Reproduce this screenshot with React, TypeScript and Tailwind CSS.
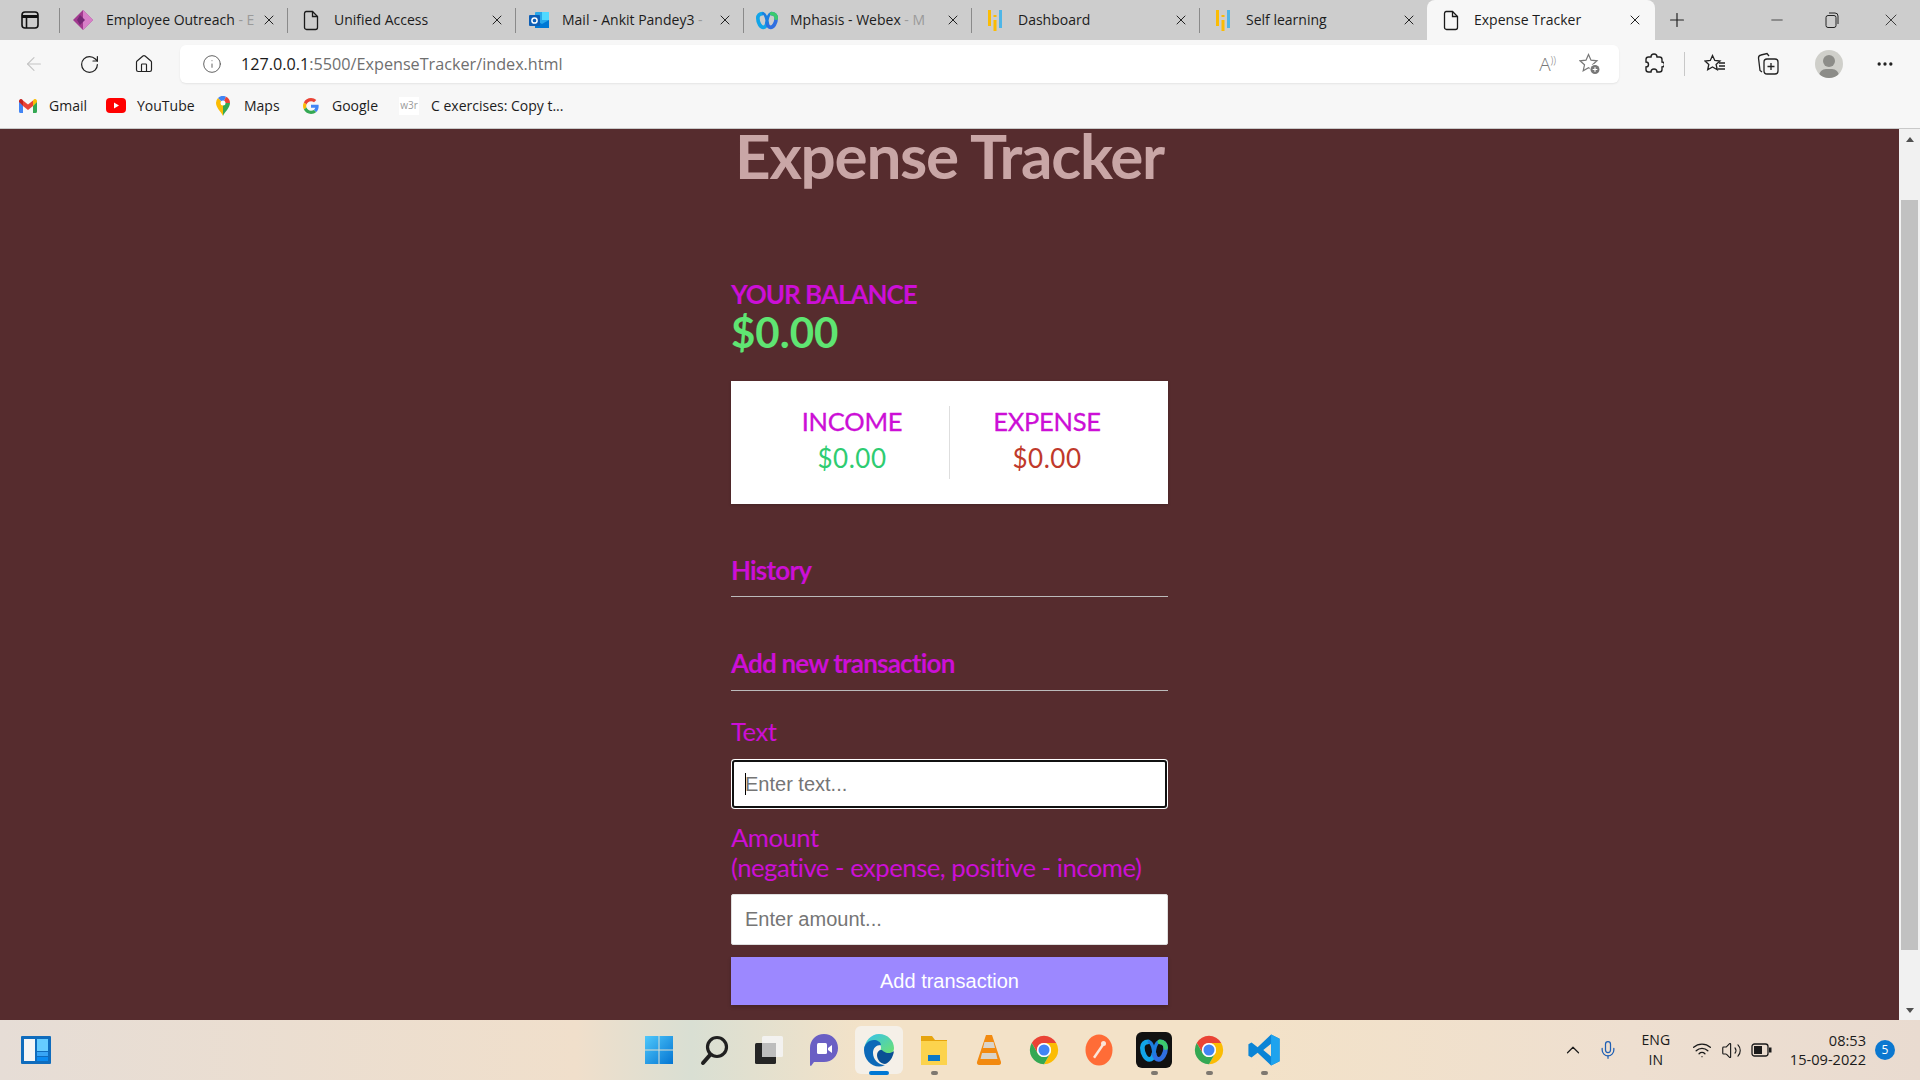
import { ArrowLeft, RotateCw, Home, Info, Plus, Minus, X, Ellipsis, ChevronUp, Mic, Wifi, Volume2 } from 'lucide-react';

function FileIcon() {
  return (
    <svg width="16" height="21" viewBox="0 0 16 20" fill="none" stroke="#1a1a1a" strokeWidth="1.3">
      <path d="M3 1h6.500L14.500 6v11a2 2 0 0 1-2 2h-9a2 2 0 0 1-2-2V3a2 2 0 0 1 1.500-2z" />
      <path d="M9.500 1v5h5" />
    </svg>
  );
}

function PowerApps() {
  return (
    <svg width="22" height="22" viewBox="0 0 22 22">
      <path d="M11 1l10 10-10 10L1 11z" fill="#a23a8f" />
      <path d="M11 1l10 10-10 10z" fill="#d87fc8" />
      <path d="M8 6l5 5-5 5-3-5z" fill="#742774" />
    </svg>
  );
}

function Outlook() {
  return (
    <svg width="22" height="20" viewBox="0 0 22 20">
      <rect x="7" y="2" width="14" height="16" rx="1" fill="#28a8ea" />
      <path d="M14 2h7v8h-7z" fill="#50d9ff" />
      <path d="M7 10l7 4 7-4v8H7z" fill="#0078d4" />
      <rect x="1" y="5" width="11" height="11" rx="1" fill="#0f5fb5" />
      <circle cx="6.500" cy="10.500" r="2.600" fill="none" stroke="#fff" strokeWidth="1.500" />
    </svg>
  );
}

function WebexMark({ size = 22 }: { size?: number }) {
  return (
    <svg width={size} height={size} viewBox="0 0 24 24" fill="none">
      <path d="M7 5c-3 0-5 2-5 5 0 5 3 10 6 10 2.500 0 3.500-2.500 4-5" stroke="#12a5e8" strokeWidth="4" strokeLinecap="round" />
      <path d="M17 5c3 0 5 2 5 5 0 5-3 10-6 10-2.500 0-3.500-2.500-4-5" stroke="#2f6fe0" strokeWidth="4" strokeLinecap="round" />
      <path d="M8 5c2.500 1 3.500 5 4 10M16 5c-2.500 1-3.500 5-4 10" stroke="#1c7ee0" strokeWidth="3" strokeLinecap="round" />
      <path d="M17 5c3 0 5 2 5 5" stroke="#3ccb6d" strokeWidth="4" strokeLinecap="round" />
    </svg>
  );
}

function BarsIcon() {
  return (
    <svg width="14" height="22" viewBox="0 0 14 22">
      <rect x="0" y="1" width="3" height="16" fill="#fbbc04" />
      <rect x="5.500" y="11" width="3" height="11" fill="#fbbc04" />
      <rect x="5.500" y="6" width="3" height="2" fill="#fbbc04" />
      <rect x="11" y="1" width="3" height="18" fill="#4db6e8" />
    </svg>
  );
}

function ChromeLogo({ size = 34 }: { size?: number }) {
  return (
    <svg width={size} height={size} viewBox="0 0 24 24">
      <path d="M3.340 7A10 10 0 0 1 20.660 7H12a5 5 0 0 0-4.330 7.500z" fill="#ea4335" />
      <path d="M20.660 7A10 10 0 0 1 12 22l4.330-7.500A5 5 0 0 0 12 7z" fill="#fbbc04" />
      <path d="M12 22A10 10 0 0 1 3.340 7l4.330 7.500a5 5 0 0 0 8.660 0z" fill="#34a853" />
      <circle cx="12" cy="12" r="5" fill="#fff" />
      <circle cx="12" cy="12" r="3.900" fill="#4285f4" />
    </svg>
  );
}

function GoogleG() {
  return (
    <svg width="16" height="16" viewBox="0 0 48 48">
      <path fill="#EA4335" d="M24 9.500c3.500 0 6.600 1.200 9.100 3.600l6.800-6.800C35.800 2.500 30.300 0 24 0 14.600 0 6.500 5.400 2.600 13.200l7.900 6.200C12.400 13.600 17.700 9.500 24 9.500z" />
      <path fill="#4285F4" d="M46.980 24.500c0-1.600-.15-3.100-.4-4.500H24v9h12.900c-.6 3-2.250 5.500-4.800 7.200l7.700 6c4.500-4.200 7.180-10.300 7.180-17.700z" />
      <path fill="#FBBC05" d="M10.500 28.600A14.500 14.500 0 0 1 9.700 24c0-1.600.3-3.200.8-4.600l-7.900-6.200A24 24 0 0 0 0 24c0 3.900.9 7.500 2.600 10.800z" />
      <path fill="#34A853" d="M24 48c6.500 0 11.900-2.100 15.800-5.800l-7.700-6c-2.100 1.400-4.900 2.300-8.100 2.300-6.300 0-11.600-4.200-13.500-9.900l-7.900 6.200C6.500 42.600 14.600 48 24 48z" />
    </svg>
  );
}

function GmailIcon() {
  return (
    <svg width="18" height="14" viewBox="0 0 18 14">
      <path d="M0 2.500V12.500A1.500 1.500 0 0 0 1.500 14H4V6.500z" fill="#4285f4" />
      <path d="M14 6.500V14h2.500A1.500 1.500 0 0 0 18 12.500V2.500z" fill="#34a853" />
      <path d="M4 7V1.500L9 5.500l5-4V7L9 11z" fill="#ea4335" />
      <path d="M0 3V2A2 2 0 0 1 3.200.4L4 1.500V7z" fill="#c5221f" />
      <path d="M18 3V2A2 2 0 0 0 14.800.4L14 1.500V7z" fill="#fbbc04" />
    </svg>
  );
}

function YoutubeIcon() {
  return (
    <svg width="20" height="15" viewBox="0 0 20 15">
      <rect width="20" height="15" rx="4" fill="#f00" />
      <path d="M8 4.500l5 3-5 3z" fill="#fff" />
    </svg>
  );
}

function MapsIcon() {
  return (
    <svg width="14" height="20" viewBox="0 0 14 20">
      <path d="M7 20C5.500 16 0 12 0 7a7 7 0 0 1 2-5l5 5z" fill="#fbbc04" />
      <path d="M2 2a7 7 0 0 1 8-1.300L7 7z" fill="#4285f4" />
      <path d="M10 .7A7 7 0 0 1 14 7l-7 0z" fill="#ea4335" />
      <path d="M14 7c0 5-5.500 9-7 13L7 7z" fill="#34a853" />
      <circle cx="7" cy="7" r="2.500" fill="#fff" />
    </svg>
  );
}

function Tab({ title, icon, fade, active }: { title: string; icon: React.ReactNode; fade?: string; active?: boolean }) {
  return (
    <div className={active
      ? 'relative flex h-[40px] w-[228px] items-center rounded-t-lg bg-[#f7f7f7] pl-[7px] pr-[12px]'
      : 'relative flex h-[25px] w-[228px] items-center border-l border-[#8a8a8a] pl-[6px] pr-[10px]'}>
      <span className="flex w-[34px] shrink-0 items-center justify-center">{icon}</span>
      <span className="mb-[2px] ml-[6px] flex-1 overflow-hidden whitespace-nowrap text-[14px] text-[#1c1c1c]">
        {title}
        {fade && <span className="text-[#9a9a9a]">{fade}</span>}
      </span>
      <X size={16} strokeWidth={1.5} className="shrink-0 text-[#222]" />
    </div>
  );
}

function TabStrip() {
  return (
    <div className="flex h-[40px] items-end bg-[#cdcdcd]">
      <div className="flex h-[40px] w-[59px] shrink-0 items-center pl-[21px]">
        <svg width="18" height="18" viewBox="0 0 18 18" fill="none" stroke="#111" strokeWidth="1.600">
          <rect x="1" y="1" width="16" height="16" rx="3" />
          <path d="M1 5.500h16" strokeWidth="3" />
          <path d="M5.500 5v12" />
        </svg>
      </div>
      <div className="flex h-[40px] items-center">
        <Tab title="Employee Outreach" fade=" - E" icon={<PowerApps />} />
        <Tab title="Unified Access" icon={<FileIcon />} />
        <Tab title="Mail - Ankit Pandey3" fade=" -" icon={<Outlook />} />
        <Tab title="Mphasis - Webex" fade=" - M" icon={<WebexMark />} />
        <Tab title="Dashboard" icon={<BarsIcon />} />
        <Tab title="Self learning" icon={<BarsIcon />} />
        <Tab title="Expense Tracker" icon={<FileIcon />} active />
      </div>
      <div className="flex h-[40px] flex-1 items-center">
        <Plus size={22} strokeWidth={1.3} className="ml-[11px] text-[#222]" />
        <div className="ml-auto flex items-center pr-[19px]">
          <Minus size={18} strokeWidth={1} className="mr-[39px] text-[#222]" />
          <svg width="14" height="16" viewBox="0 0 14 16" fill="none" stroke="#222" className="mr-[42px]">
            <rect x="1" y="3.500" width="10" height="12" rx="2" />
            <path d="M4 1h6a3 3 0 0 1 3 3v8" />
          </svg>
          <X size={20} strokeWidth={1} className="text-[#222]" />
        </div>
      </div>
    </div>
  );
}

function Toolbar() {
  return (
    <div className="flex h-[48px] items-center bg-[#f7f7f7]">
      <ArrowLeft size={22} strokeWidth={1.2} className="ml-[23px] text-[#c4c4c4]" />
      <RotateCw size={21} strokeWidth={1.4} className="ml-[34px] text-[#222]" />
      <Home size={20} strokeWidth={1.4} className="ml-[34px] text-[#222]" />
      <div className="ml-[26px] flex h-[38px] w-[1439px] items-center rounded-md bg-white pl-[22px] shadow-[0_1px_2px_rgba(0,0,0,0.08)]">
        <Info size={20} strokeWidth={1.1} className="text-[#555]" />
        <span className="ml-[19px] text-[16.200px] text-[#1a1a1a]">
          127.0.0.1<span className="text-[#6f6f6f]">:5500/ExpenseTracker/index.html</span>
        </span>
        <div className="ml-auto flex items-center gap-[23px] pr-[18px]">
          <span className="text-[19px] font-light leading-none text-[#777]">A<span className="align-top text-[10px]">))</span></span>
          <svg width="22" height="22" viewBox="0 0 22 22" fill="none" stroke="#777" strokeWidth="1.200">
            <path d="M9.500 1.500l2.500 5.700 6 .6-4.500 4 1.300 6-5.300-3.100-5.300 3.100 1.300-6L1 7.800l6-.6z" />
            <circle cx="16" cy="16.500" r="5.500" fill="#fff" stroke="none" />
            <circle cx="16" cy="16.500" r="4.500" fill="#777" stroke="none" />
            <path d="M16 14.200v4.600M13.700 16.500h4.600" stroke="#fff" />
          </svg>
        </div>
      </div>
      <svg width="20" height="22" viewBox="0 0 20 22" fill="none" stroke="#222" strokeWidth="1.400" className="ml-[25px]">
        <path d="M7 4a3 3 0 0 1 6 0h2.500A2.500 2.500 0 0 1 18 6.500V9a2.500 2.500 0 0 1 0 5v2.500a2.500 2.500 0 0 1-2.500 2.500H13a3 3 0 0 0-6 0H4.500A2.500 2.500 0 0 1 2 16.500V14a2.500 2.500 0 0 0 0-5V6.500A2.500 2.500 0 0 1 4.500 4z" />
      </svg>
      <div className="ml-[20px] h-[24px] w-px bg-[#c8c8c8]" />
      <svg width="22" height="20" viewBox="0 0 22 20" fill="none" stroke="#222" strokeWidth="1.300" className="ml-[19px]">
        <path d="M8.500 1.500l2.300 5 5.200.5-3.900 3.500 1.200 5.300-4.800-2.800-4.800 2.800 1.100-5.300L1 7l5.300-.5z" />
        <path d="M15 9h6M15 12h6M14 15h7" />
      </svg>
      <svg width="22" height="24" viewBox="0 0 22 24" fill="none" stroke="#222" strokeWidth="1.300" className="ml-[31px]">
        <path d="M5 20l-2-1.500L1.500 6A3 3 0 0 1 4 3l6-1.500 2 2.500" />
        <rect x="7" y="7" width="14" height="15" rx="3" />
        <path d="M14 11v7M10.500 14.500h7" />
      </svg>
      <div className="relative ml-[36px] h-[28px] w-[28px] overflow-hidden rounded-full bg-[#cfcfca]">
        <div className="absolute left-[8px] top-[5px] h-[12px] w-[12px] rounded-full bg-[#8c8c88]" />
        <div className="absolute left-[4px] top-[19px] h-[14px] w-[20px] rounded-full bg-[#8c8c88]" />
      </div>
      <Ellipsis size={20} strokeWidth={2} className="ml-[32px] text-[#222]" />
    </div>
  );
}

function Bookmark({ icon, label, className }: { icon: React.ReactNode; label: string; className: string }) {
  return (
    <div className={className}>
      <span className="flex w-[24px] shrink-0 items-center justify-center">{icon}</span>
      <span className="ml-[9px] whitespace-nowrap text-[14px] text-[#1c1c1c]">{label}</span>
    </div>
  );
}

function BookmarksBar() {
  return (
    <div className="flex h-[41px] items-center border-b border-[#c9c9c9] bg-[#f7f7f7] pb-[5px] pl-[16px]">
      <Bookmark className="flex w-[88px] items-center" icon={<GmailIcon />} label="Gmail" />
      <Bookmark className="flex w-[107px] items-center" icon={<YoutubeIcon />} label="YouTube" />
      <Bookmark className="flex w-[88px] items-center" icon={<MapsIcon />} label="Maps" />
      <Bookmark className="flex w-[100px] items-center" icon={<GoogleG />} label="Google" />
      <div className="flex items-center">
        <span className="flex h-[18px] w-[20px] items-center justify-center bg-white text-[10px] text-[#9a9a9a]">w3r</span>
        <span className="ml-[12px] whitespace-nowrap text-[14px] text-[#1c1c1c]">C exercises: Copy t...</span>
      </div>
    </div>
  );
}

function Scrollbar() {
  return (
    <div className="flex w-[21px] shrink-0 flex-col items-center bg-[#f1f1f1]">
      <div className="flex h-[20px] items-center justify-center">
        <div className="h-0 w-0 border-x-[4px] border-b-[5px] border-x-transparent border-b-[#505050]" />
      </div>
      <div className="mt-[51px] h-[750px] w-[17px] bg-[#c1c1c1]" />
      <div className="mt-auto flex h-[20px] items-center justify-center">
        <div className="h-0 w-0 border-x-[4px] border-t-[5px] border-x-transparent border-t-[#505050]" />
      </div>
    </div>
  );
}

function ExpenseApp() {
  return (
    <div className="flex min-w-0 flex-1 justify-center bg-[#562c2e] font-['Lato',sans-serif]">
      <div className="w-[437px]">
        <h1 className="text-center text-[62px] font-bold leading-[53px] tracking-[-1.250px] text-[#c9a6a6]">Expense Tracker</h1>
        <h4 className="mt-[97px] text-[26px] font-bold leading-[31px] tracking-[-1px] text-[#cc0fd6]">YOUR BALANCE</h4>
        <h1 className="mt-[-1px] text-[42px] font-bold leading-[47px] text-[#5fe572]">$0.00</h1>
        <div className="mt-[25px] flex h-[123px] items-center justify-center bg-white px-[24px] pb-[3px] shadow-[0_1px_3px_rgba(0,0,0,0.2)]">
          <div className="flex-1 text-center">
            <h4 className="mb-[4px] text-[25.500px] leading-[30px] tracking-[-0.250px] text-[#cc0fd6] [-webkit-text-stroke:0.3px_#cc0fd6]">INCOME</h4>
            <p className="text-[26px] leading-[36px] tracking-[0.500px] text-[#2ecc71]">$0.00</p>
          </div>
          <div className="mt-[3px] h-[73px] w-px bg-[#dedede]" />
          <div className="flex-1 text-center">
            <h4 className="mb-[4px] text-[25.500px] leading-[30px] tracking-[-0.250px] text-[#cc0fd6] [-webkit-text-stroke:0.3px_#cc0fd6]">EXPENSE</h4>
            <p className="text-[26px] leading-[36px] tracking-[0.500px] text-[#c0392b]">$0.00</p>
          </div>
        </div>
        <h3 className="mt-[43px] border-b border-[#bbbbbb] pb-[2px] text-[26px] font-bold leading-[47px] tracking-[-0.800px] text-[#cc0fd6]">History</h3>
        <h3 className="mt-[43px] border-b border-[#bbbbbb] pb-[3px] text-[26px] font-bold leading-[47px] tracking-[-0.800px] text-[#cc0fd6]">Add new transaction</h3>
        <label className="mt-[20px] block text-[25.600px] leading-[41px] tracking-[-0.450px] text-[#cc0fd6]">Text</label>
        <div className="relative mt-[7px]">
          <input
            placeholder="Enter text..."
            className="block h-[50px] w-full rounded-[4px] bg-white px-[14px] font-['Liberation_Sans',sans-serif] text-[20px] shadow-[inset_0_0_0_1px_#fff,inset_0_0_0_3px_#111] placeholder:text-[#757575]"
          />
          <span className="absolute left-[14px] top-[14px] h-[22px] w-px bg-black" />
        </div>
        <label className="mt-[13px] block text-[25.600px] leading-[30px] tracking-[-0.450px] text-[#cc0fd6]">
          Amount <br />
          (negative - expense, positive - income)
        </label>
        <input
          placeholder="Enter amount..."
          className="mt-[12px] block h-[51px] w-full rounded-[2px] border border-[#dedede] bg-white px-[13px] font-['Liberation_Sans',sans-serif] text-[20px] placeholder:text-[#757575]"
        />
        <button className="mt-[12px] block h-[48px] w-full bg-[#9c88ff] font-['Liberation_Sans',sans-serif] text-[20px] text-white shadow-[0_2px_4px_rgba(0,0,0,0.2)]">
          Add transaction
        </button>
      </div>
    </div>
  );
}

function TaskIcon({ children, dot, active }: { children: React.ReactNode; dot?: boolean; active?: boolean }) {
  return (
    <div className={active
      ? 'relative flex h-[48px] w-[48px] items-center justify-center rounded-md bg-[#f5f0e8]'
      : 'relative flex h-[48px] w-[48px] items-center justify-center'}>
      {children}
      {dot && <span className="absolute bottom-[-1px] h-[4px] w-[7px] rounded-full bg-[#7e7870]" />}
      {active && <span className="absolute bottom-[-1px] h-[4px] w-[20px] rounded-full bg-[#0078d4]" />}
    </div>
  );
}

function Taskbar() {
  return (
    <div className="flex h-[60px] shrink-0 items-center bg-[linear-gradient(90deg,#e6ddd6_0%,#f0dfcb_30%,#d9dfd3_36%,#f3e2c8_45%,#f3e2c8_65%,#eedfd0_85%,#e9dbd0_100%)] font-['Open_Sans',sans-serif]">
      <svg width="30" height="28" viewBox="0 0 30 28" className="ml-[21px]">
        <rect width="30" height="28" rx="1" fill="#0f6cbd" />
        <rect x="3" y="3" width="11" height="22" fill="#f5f5f5" />
        <rect x="16" y="3" width="11" height="12" fill="#66ccff" />
        <rect x="16" y="16" width="11" height="4" fill="#38a5f5" />
        <rect x="16" y="21" width="11" height="4" fill="#0a8af0" />
      </svg>
      <div className="ml-[584px] flex items-center gap-[7px]">
        <TaskIcon>
          <svg width="30" height="30" viewBox="0 0 30 30">
            <defs>
              <linearGradient id="win" x1="0" y1="0" x2="1" y2="1">
                <stop offset="0" stopColor="#4fc8fb" />
                <stop offset="1" stopColor="#0475d2" />
              </linearGradient>
            </defs>
            <path d="M1 1h13.500v13.500H1zM15.500 1H29v13.500H15.500zM1 15.500h13.500V29H1zM15.500 15.500H29V29H15.500z" fill="url(#win)" />
          </svg>
        </TaskIcon>
        <TaskIcon>
          <svg width="30" height="32" viewBox="0 0 30 32" fill="none" stroke="#202020">
            <circle cx="18" cy="13" r="9.500" strokeWidth="3.200" />
            <path d="M11 21l-7 8" strokeWidth="4" strokeLinecap="round" />
          </svg>
        </TaskIcon>
        <TaskIcon>
          <svg width="30" height="30" viewBox="0 0 30 30">
            <rect x="1" y="8" width="21" height="21" rx="1.500" fill="#252525" />
            <rect x="8" y="1" width="21" height="21" rx="1.500" fill="#f4f4f4" fillOpacity="0.900" />
            <rect x="8" y="8" width="14" height="14" fill="#bdbdbd" />
          </svg>
        </TaskIcon>
        <TaskIcon>
          <svg width="30" height="34" viewBox="0 0 30 34">
            <path d="M15 1c8 0 14 6 14 14s-6 14-14 14H5l-3 4c-1 0-1-1-1-2V15C1 7 7 1 15 1z" fill="#6a5fc4" />
            <rect x="8" y="10" width="10" height="11" rx="1.500" fill="#fff" />
            <path d="M19 15l4-3v8l-4-3z" fill="#fff" />
          </svg>
        </TaskIcon>
        <TaskIcon active>
          <svg width="32" height="34" viewBox="0 0 32 34">
            <defs>
              <linearGradient id="edgeTop" x1="0" y1="0" x2="1" y2="1">
                <stop offset="0" stopColor="#35c1f1" />
                <stop offset="1" stopColor="#6ee26c" />
              </linearGradient>
            </defs>
            <path d="M16 1c9 0 15 7 15 14 0 4-3 6-7 6-4 0-7-1-7-3 0-1 1-1.500 1-3.500 0-3-3-5-6-5-5 0-9 3-11 7C2 8 8 1 16 1z" fill="url(#edgeTop)" />
            <path d="M1 17c0-6 5-10 10-10 3 0 7 2 7 5-5 0-8 3-8 8 0 6 5 12 12 12-2 1-4 1.500-6 1.500C8 33.500 1 26 1 17z" fill="#0c69b8" />
            <path d="M14 22c0-3 2-5 4-5s2 2 6 3c3 .5 6-1 7-2-1 7-5 12-9 13-4 0-8-4-8-9z" fill="#0a4f94" />
          </svg>
        </TaskIcon>
        <TaskIcon dot>
          <svg width="28" height="30" viewBox="0 0 28 30">
            <path d="M1 1h11l3 4h12v3H1z" fill="#e6a40e" />
            <rect x="1" y="6" width="26" height="24" fill="#fcd34d" />
            <path d="M8 20h12v6H8z" fill="#0a78c8" />
          </svg>
        </TaskIcon>
        <TaskIcon>
          <svg width="28" height="32" viewBox="0 0 28 32">
            <path d="M11 1h6l9 27c.5 2-1 3-2 3H4c-1 0-2.500-1-2-3z" fill="#f28a10" />
            <path d="M9.500 8h9l1.500 6H8zM7 19h14l1.500 6h-17z" fill="#d9d4cb" />
          </svg>
        </TaskIcon>
        <TaskIcon><ChromeLogo /></TaskIcon>
        <TaskIcon>
          <svg width="30" height="32" viewBox="0 0 30 32">
            <ellipse cx="15" cy="16" rx="13.500" ry="15.500" fill="#ff6c37" />
            <path d="M9 23l9-13 2 1.500-9 13z" fill="#fbe5d9" />
            <circle cx="19.500" cy="9.500" r="2.500" fill="#fbe5d9" />
          </svg>
        </TaskIcon>
        <TaskIcon dot>
          <div className="flex h-[36px] w-[36px] items-center justify-center rounded-md bg-[#111]">
            <WebexMark size={28} />
          </div>
        </TaskIcon>
        <TaskIcon dot><ChromeLogo /></TaskIcon>
        <TaskIcon dot>
          <svg width="34" height="36" viewBox="0 0 24 24">
            <path fillRule="evenodd" d="M17 1l6 3v16l-6 3L7.500 14l-4.300 3.300L1 16V8l2.200-1.300L7.500 10zm0 6.500L11.500 12l5.500 4.500z" fill="#0a84d6" />
            <path d="M17 1l6 3v16l-6 3z" fill="#1ea3ee" />
          </svg>
        </TaskIcon>
      </div>
      <div className="ml-auto flex items-center text-[#1a1a1a]">
        <ChevronUp size={22} strokeWidth={1.3} />
        <Mic size={20} strokeWidth={1.5} className="ml-[14px] text-[#1f5fb4]" />
        <div className="ml-[18px] w-[40px] text-center text-[14px] leading-[20px]">ENG<br />IN</div>
        <Wifi size={20} strokeWidth={1.6} className="ml-[16px]" />
        <Volume2 size={21} strokeWidth={1.3} className="ml-[9px]" />
        <svg width="21" height="14" viewBox="0 0 21 14" fill="none" stroke="#1a1a1a" strokeWidth="1.300" className="ml-[9px]">
          <rect x="1" y="1" width="16" height="12" rx="2.500" />
          <rect x="3" y="3" width="8" height="8" fill="#1a1a1a" stroke="none" />
          <rect x="18" y="4.500" width="2.500" height="5" fill="#1a1a1a" stroke="none" />
        </svg>
        <div className="ml-[18px] text-right text-[14.600px] leading-[19px]">08:53<br />15-09-2022</div>
        <div className="ml-[9px] mr-[25px] flex h-[20px] w-[20px] items-center justify-center rounded-full bg-[#0b78d0] text-[12px] text-white">5</div>
      </div>
    </div>
  );
}

export default function App() {
  return (
    <div className="flex h-[1080px] w-[1920px] flex-col overflow-hidden font-['Open_Sans',sans-serif]">
      <TabStrip />
      <Toolbar />
      <BookmarksBar />
      <div className="flex min-h-0 flex-1">
        <ExpenseApp />
        <Scrollbar />
      </div>
      <Taskbar />
    </div>
  );
}
